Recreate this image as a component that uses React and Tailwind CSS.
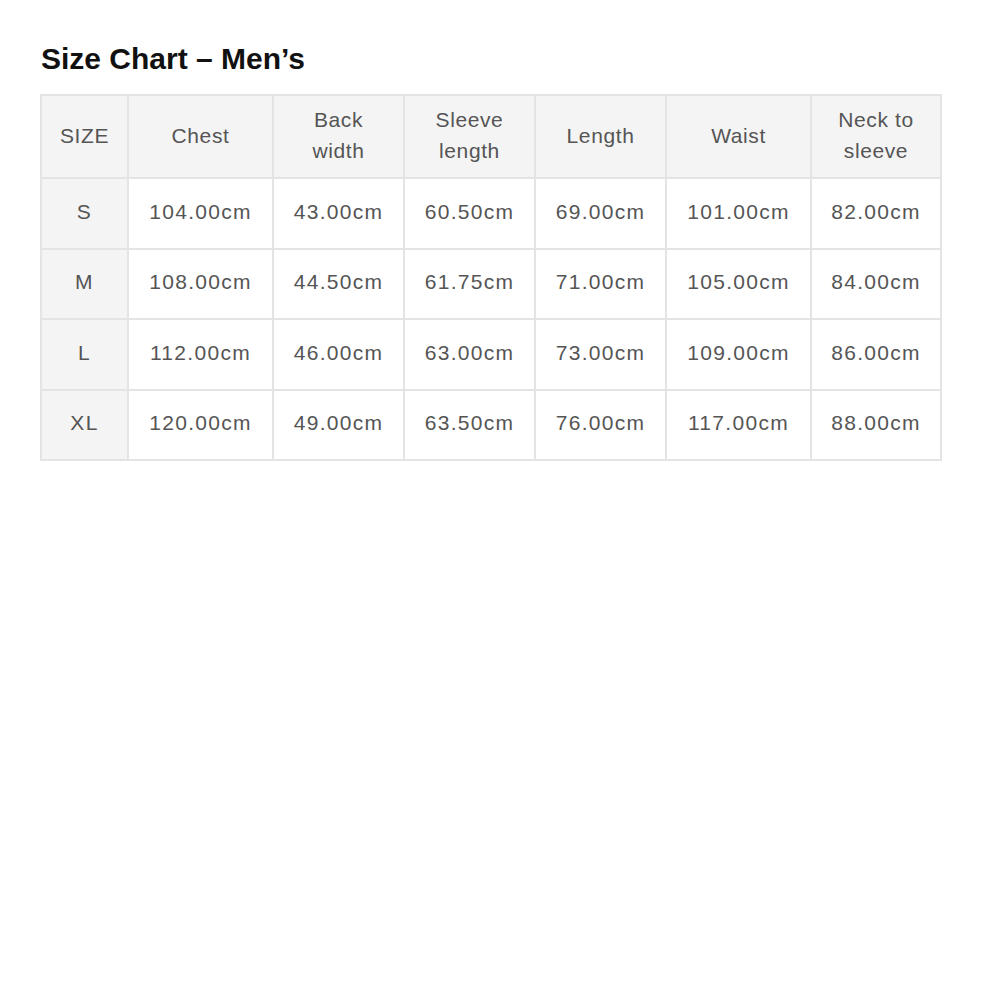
import React from 'react'

const headers = ['SIZE', 'Chest', 'Back width', 'Sleeve length', 'Length', 'Waist', 'Neck to sleeve']
const widths = ['w-[87px]', 'w-[145px]', 'w-[131px]', 'w-[131px]', 'w-[131px]', 'w-[145px]', 'w-[130px]']

const rows = [
  ['S', '104.00cm', '43.00cm', '60.50cm', '69.00cm', '101.00cm', '82.00cm'],
  ['M', '108.00cm', '44.50cm', '61.75cm', '71.00cm', '105.00cm', '84.00cm'],
  ['L', '112.00cm', '46.00cm', '63.00cm', '73.00cm', '109.00cm', '86.00cm'],
  ['XL', '120.00cm', '49.00cm', '63.50cm', '76.00cm', '117.00cm', '88.00cm'],
]

export default function App() {
  return (
    <div className="min-h-screen bg-white pl-[40px] pt-[40px]" style={{ fontFamily: '"Liberation Sans", Arial, sans-serif' }}>
      <h1 className="text-[30px] font-bold text-[#111] leading-[38px] pl-[1px]">Size Chart – Men’s</h1>
      <table className="mt-[16px] border-collapse table-fixed w-[900px] text-[21px] text-[#555]">
        <colgroup>
          {widths.map((w, i) => <col key={i} className={w} />)}
        </colgroup>
        <thead>
          <tr className="h-[83px] bg-[#f4f4f4]">
            {headers.map((h) => (
              <th key={h} className="border-2 border-[#e4e4e4] font-normal leading-[31px] px-3 pb-[3px] text-center tracking-[0.6px]">
                {h}
              </th>
            ))}
          </tr>
        </thead>
        <tbody>
          {rows.map((r) => (
            <tr key={r[0]} className="h-[70.5px]">
              {r.map((c, i) => (
                <td key={i} className={`border-2 border-[#e4e4e4] text-center pb-[4px] tracking-[1.3px] ${i === 0 ? 'bg-[#f4f4f4]' : 'bg-white'}`}>
                  {c}
                </td>
              ))}
            </tr>
          ))}
        </tbody>
      </table>
    </div>
  )
}
